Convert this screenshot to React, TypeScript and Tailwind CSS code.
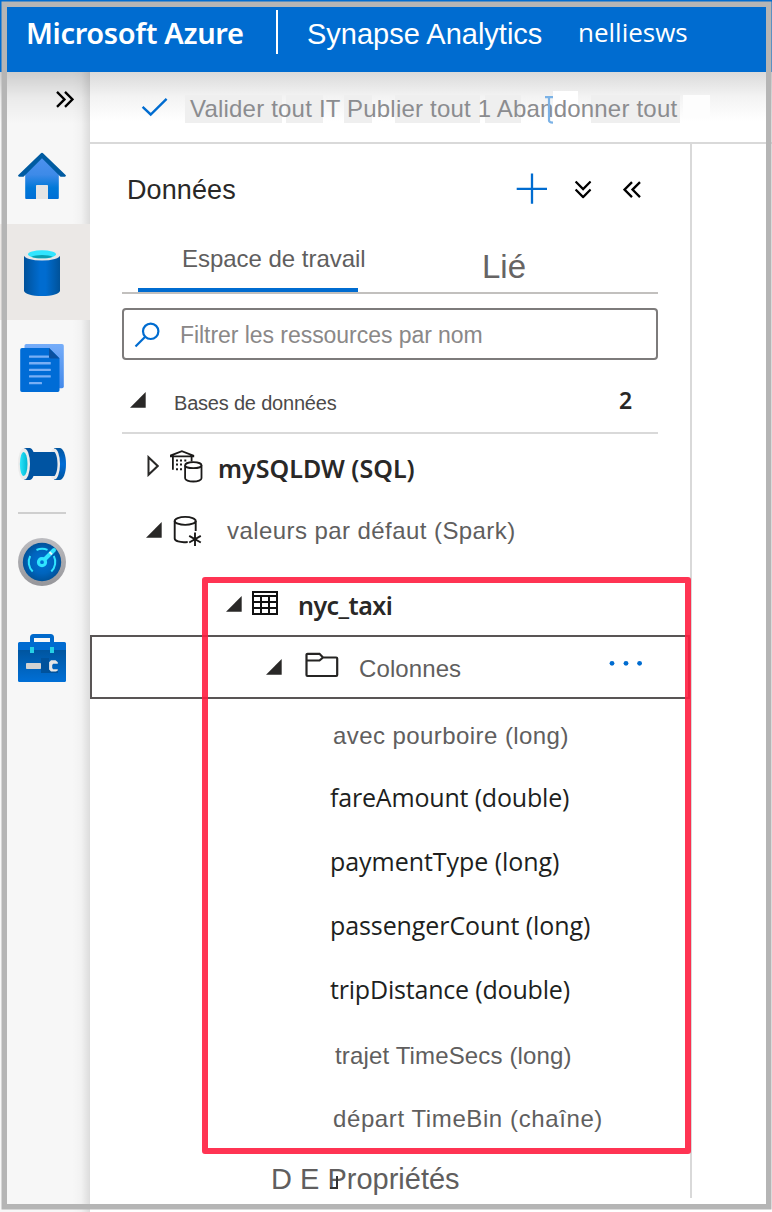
import React from "react";

function HomeIcon() {
  return (
    <svg viewBox="0 0 48 48" className="h-12 w-12">
      <defs>
        <linearGradient id="home" x1="0" y1="0" x2="0" y2="1">
          <stop offset="0" stopColor="#5093f0" />
          <stop offset="0.45" stopColor="#3d8ae8" />
          <stop offset="0.75" stopColor="#0078d8" />
          <stop offset="1" stopColor="#006fd6" />
        </linearGradient>
      </defs>
      <path d="M24 3 7.2 19.5V45.9a1 1 0 0 0 1 1h31.6a1 1 0 0 0 1-1V19.5z" fill="url(#home)" />
      <path d="M22.7 1.500a1.8 1.8 0 0 1 2.600 0L47.600 23a.8.8 0 0 1 0 1.200l-.6.6H42.500L24 6.200 5.500 24.800H1L.4 24.200a.8.8 0 0 1 0-1.200z" fill="#005ba1" />
      <path d="M18 33.800a.8.8 0 0 1 .8-.8h10.400a.8.8 0 0 1 .8.8v13.100H18z" fill="#e4e4e4" />
    </svg>
  );
}

function DataIcon() {
  return (
    <svg viewBox="0 0 48 48" className="h-12 w-12">
      <defs>
        <linearGradient id="cyl" x1="0" y1="0" x2="1" y2="0">
          <stop offset="0" stopColor="#00519a" />
          <stop offset="0.45" stopColor="#006cd0" />
          <stop offset="0.6" stopColor="#006cd0" />
          <stop offset="1" stopColor="#005299" />
        </linearGradient>
      </defs>
      <path d="M6 7.400V42.400C6 45.600 14 48 24 48s18-2.400 18-5.600V7.400z" fill="url(#cyl)" />
      <ellipse cx="24" cy="7.300" rx="18" ry="5.300" fill="#e6e6e6" />
      <ellipse cx="24" cy="6.300" rx="14" ry="4" fill="#30e5ff" />
      <path d="M13.300 8.800C15.800 7.600 19.500 6.900 24 6.900s8.200.7 10.700 1.900c-2.500 1-6.300 1.500-10.700 1.500s-8.200-.5-10.700-1.500z" fill="#0aa0b2" />
    </svg>
  );
}

function DocIcon() {
  return (
    <svg viewBox="0 0 48 48" className="h-12 w-12">
      <defs>
        <linearGradient id="back" x1="0" y1="0" x2="0" y2="1">
          <stop offset="0" stopColor="#76adf9" />
          <stop offset="1" stopColor="#4389ea" />
        </linearGradient>
      </defs>
      <rect x="6.500" y="0" width="39.300" height="44.300" rx="1.800" fill="url(#back)" />
      <path d="M4 4h27.200l10.300 10.300v32a1.700 1.700 0 0 1-1.700 1.700H3.900a1.700 1.700 0 0 1-1.700-1.700V5.800A1.800 1.800 0 0 1 4 4z" fill="#006cd6" />
      <path d="M31 4l10.500 10.400H32.600A1.600 1.600 0 0 1 31 12.800z" fill="#0a509f" />
      <g fill="#78aff5">
        <rect x="11" y="11.500" width="20" height="2.300" rx=".5" />
        <rect x="11" y="18.100" width="21.800" height="2.300" rx=".5" />
        <rect x="11" y="24.700" width="21.800" height="2.300" rx=".5" />
        <rect x="11" y="31.300" width="21.800" height="2.300" rx=".5" />
        <rect x="11" y="37.900" width="13" height="2.300" rx=".5" />
      </g>
    </svg>
  );
}

function PipeIcon() {
  return (
    <svg viewBox="0 0 48 48" className="h-12 w-12">
      <defs>
        <linearGradient id="pipe" x1="0" y1="0" x2="0" y2="1">
          <stop offset="0" stopColor="#0055a0" />
          <stop offset="0.5" stopColor="#006cd6" />
          <stop offset="1" stopColor="#0055a0" />
        </linearGradient>
        <linearGradient id="hole" x1="0" y1="0" x2="1" y2="0">
          <stop offset="0" stopColor="#2be4fb" />
          <stop offset="1" stopColor="#00b8d4" />
        </linearGradient>
      </defs>
      <path d="M36 8h5.600C45.300 8 48 14.800 48 24s-2.700 16-6.400 16H36z" fill="url(#pipe)" />
      <ellipse cx="36.300" cy="24" rx="5.700" ry="15.600" fill="#ebebeb" />
      <path d="M6 8h5.500c1.700 0 3 1.500 4 4h21c1.900 2 3 6.600 3 12s-1.100 10-3 12h-21c-1 2.500-2.300 4-4 4H6z" fill="#0054a2" />
      <ellipse cx="6" cy="24" rx="6" ry="15.800" fill="#ebebeb" />
      <ellipse cx="5.700" cy="24" rx="3.800" ry="12" fill="url(#hole)" />
    </svg>
  );
}

function GaugeIcon() {
  return (
    <svg viewBox="0 0 48 48" className="h-12 w-12">
      <defs>
        <linearGradient id="ring" x1="0" y1="0" x2="0" y2="1">
          <stop offset="0" stopColor="#bcbcc0" />
          <stop offset="1" stopColor="#96969a" />
        </linearGradient>
        <radialGradient id="dial">
          <stop offset="0" stopColor="#0070d4" />
          <stop offset="0.6" stopColor="#0064bd" />
          <stop offset="1" stopColor="#00529a" />
        </radialGradient>
      </defs>
      <circle cx="24" cy="24" r="24" fill="url(#ring)" />
      <circle cx="24" cy="24" r="19.200" fill="url(#dial)" />
      <g fill="none" stroke="#30e5ff" strokeWidth="2">
        <path d="M14.700 33.500A13.200 13.200 0 0 1 12.200 18" />
        <path d="M18.500 12A13.200 13.200 0 0 1 29.500 11.800" />
        <path d="M35.800 18A13.200 13.200 0 0 1 33.300 33.500" />
      </g>
      <path d="M26 22 36 12" stroke="#30e5ff" strokeWidth="4" strokeLinecap="round" />
      <path d="M31.500 14 34 16.500" stroke="#e8f8fb" strokeWidth="2" />
      <circle cx="24" cy="24.200" r="3.500" fill="#0070d4" stroke="#30e5ff" strokeWidth="3.200" />
    </svg>
  );
}

function ToolboxIcon() {
  return (
    <svg viewBox="0 0 48 48" className="h-12 w-12">
      <defs>
        <linearGradient id="box" x1="0" y1="0" x2="0" y2="1">
          <stop offset="0" stopColor="#00559f" />
          <stop offset="1" stopColor="#006fd6" />
        </linearGradient>
      </defs>
      <path d="M14 9V3.500A1.500 1.500 0 0 1 15.500 2h17A1.500 1.500 0 0 1 34 3.500V9" fill="none" stroke="#0069cb" strokeWidth="4" />
      <path d="M1.500 8h45A1.500 1.500 0 0 1 48 9.500V16H0V9.500A1.500 1.500 0 0 1 1.500 8z" fill="#006bd0" />
      <path d="M0 16h48v30.500a1.500 1.500 0 0 1-1.500 1.500h-45A1.500 1.500 0 0 1 0 46.500z" fill="url(#box)" />
      <rect x="12" y="13" width="4" height="6" fill="#25cfe4" />
      <rect x="32" y="13" width="4" height="6" fill="#25cfe4" />
      <path d="M23 24h8v15h-8z" fill="#00529c" />
      <path d="M31 35h9v4h-9z" fill="#00529c" />
      <rect x="8" y="29" width="15" height="6" rx=".8" fill="#d2d2d2" />
      <path d="M33 26.200h4.500l2.300 2.100v1.500h-4.600l-1 1.200v3l1 1.200h4.600v1.200L38 37.600h-5l-1.900-2v-7.300z" fill="#e6e6e6" />
    </svg>
  );
}

function DoubleChevron({ className }: { className: string }) {
  return (
    <svg viewBox="0 0 18 17" className={"h-[17px] w-[18px] shrink-0 " + className} fill="none" stroke="#000" strokeWidth="2.300">
      <path d="M1 .9 8.500 8.400 1 15.900M9 .9 16.500 8.400 9 15.900" />
    </svg>
  );
}

function Expanded({ className }: { className: string }) {
  return (
    <svg viewBox="0 0 16 16" className={"h-4 w-4 shrink-0 " + className}>
      <path d="M15.700 0V15.700H0z" fill="#292827" />
    </svg>
  );
}

function Collapsed({ className }: { className: string }) {
  return (
    <svg viewBox="0 0 12 22" className={"h-[22px] w-3 shrink-0 " + className}>
      <path d="M1.500 2.200 10.700 11 1.500 19.800z" fill="none" stroke="#292827" strokeWidth="2" />
    </svg>
  );
}

const arial = "whitespace-nowrap leading-none font-['Liberation_Sans',Arial,sans-serif] ";
const segoe = "whitespace-nowrap leading-none font-['Open_Sans','Noto_Sans',sans-serif] ";
const segoeStrong = "whitespace-nowrap leading-none font-semibold font-['Noto_Sans','Open_Sans',sans-serif] ";

const columns = [
  { label: "avec pourboire (long)", style: arial + "mt-[25px] ml-[243px] text-[24px] tracking-[0.430px] text-[#605e5e]" },
  { label: "fareAmount (double)", style: segoe + "mt-[22px] ml-[240px] text-[25px] tracking-[-0.180px] text-[#201f1e]" },
  { label: "paymentType (long)", style: segoe + "mt-[22px] ml-[240px] text-[25px] tracking-[-0.050px] text-[#201f1e]" },
  { label: "passengerCount (long)", style: segoe + "mt-[22px] ml-[240px] text-[25px] tracking-[-0.090px] text-[#201f1e]" },
  { label: "tripDistance (double)", style: segoe + "mt-[22px] ml-[240px] text-[25px] tracking-[-0.190px] text-[#201f1e]" },
  { label: "trajet TimeSecs (long)", style: arial + "mt-[25px] ml-[245px] text-[24px] tracking-[0.150px] text-[#605e5e]" },
  { label: "départ TimeBin (chaîne)", style: arial + "mt-[24px] ml-[243px] text-[24px] tracking-[0.600px] text-[#605e5e]" },
];

const ghosts = [
  "left-[95px] top-[23px] w-[97px] h-[28px] bg-[#efefef]",
  "left-[196px] top-[23px] w-[37px] h-[28px] bg-[#efefef]",
  "left-[254px] top-[23px] w-[28px] h-[28px] bg-[#efefef]",
  "left-[305px] top-[23px] w-[85px] h-[28px] bg-[#efefef]",
  "left-[395px] top-[23px] w-[36px] h-[28px] bg-[#efefef]",
  "left-[501px] top-[23px] w-[89px] h-[28px] bg-[#efefef]",
  "left-[463px] top-[19px] w-[25px] h-[32px] bg-white",
  "left-[593px] top-[23px] w-[27px] h-[23px] bg-[#fdfdfd]",
];

function Header() {
  return (
    <header className="flex h-[72px] bg-[#006cd0] text-white">
      <h1 className={segoeStrong + "mt-[18px] ml-[26px] w-[250px] text-[29px] tracking-[-0.350px]"}>Microsoft Azure</h1>
      <div className="mt-[10px] h-[44px] w-[2px] bg-white" />
      <span className={arial + "mt-[20px] ml-[29px] w-[271px] text-[29px]"}>Synapse Analytics</span>
      <span className={segoe + "mt-[19px] text-[26px]"}>nelliesws</span>
    </header>
  );
}

function Sidebar() {
  return (
    <nav className="relative flex w-[90px] shrink-0 flex-col bg-[#f7f7f7]">
      <div className="pointer-events-none absolute inset-y-0 right-0 w-[18px] bg-linear-to-r from-transparent via-black/[0.02] to-black/[0.11]" />
      <div className="pointer-events-none absolute inset-x-0 top-0 h-[52px] bg-linear-to-b from-black/[0.17] via-black/[0.05] to-transparent" />
      <div className="flex h-[56px] pt-[19px] pl-[56px]"><DoubleChevron className="" /></div>
      <div className="flex h-24 items-center pl-[18px]"><HomeIcon /></div>
      <div className="relative flex h-24 items-center bg-[#ebe8e6] pl-[18px]"><DataIcon /></div>
      <div className="flex h-24 items-center pl-[18px]"><DocIcon /></div>
      <div className="flex h-24 items-center pl-[18px]"><PipeIcon /></div>
      <div className="ml-[18px] h-[2px] w-12 bg-[#cfcfcf]" />
      <div className="flex h-24 items-center pl-[18px]"><GaugeIcon /></div>
      <div className="flex h-24 items-center pl-[18px]"><ToolboxIcon /></div>
    </nav>
  );
}

function Toolbar() {
  return (
    <div className="relative flex h-[72px] border-b-2 border-[#d9d9d9] bg-linear-to-b from-[#dadada] via-[#f3f3f3] via-35% to-white to-70%">
      {ghosts.map((g) => (
        <div key={g} className={"absolute " + g} />
      ))}
      <svg viewBox="0 0 28 20" className="relative mt-[25px] ml-[51px] h-5 w-7 shrink-0" fill="none" stroke="#006cd0" strokeWidth="2.400">
        <path d="M1.600 9.900 9.700 17.500 25.600 1.900" />
      </svg>
      <span className={arial + "relative mt-[25px] ml-[21px] text-[24px] tracking-[0.200px] text-[#8b8c8f]"}>
        Valider tout IT Publier tout 1 Abandonner tout
      </span>
      <svg viewBox="0 0 8 28" className="absolute top-[24px] left-[455px] h-7 w-2" fill="none" stroke="#7bb2e6" strokeWidth="2.200">
        <path d="M0 1.200H8M4 1.200V24.500Q4 26.500 8 26.600" />
      </svg>
    </div>
  );
}

function Tree() {
  return (
    <div className="flex flex-col">
      <div className="flex h-[66px]">
        <Collapsed className="mt-[21px] ml-[57px]" />
        <svg viewBox="0 0 34 34" className="mt-[15px] ml-[11px] h-[34px] w-[34px] shrink-0" fill="none" stroke="#1b1a19" strokeWidth="1.800">
          <path d="M.5 8.300V6.600L11.900 2.200 23.300 6.600V8.300M.5 7.400H23.300M2.900 8V20.800M21.600 8V12.500" />
          <path d="M6 11.500h2M10 11.500h2M14.300 11.500h2M6 15.600h2M10 15.600h2M6 20.300h2M10 20.300h2" strokeWidth="2" />
          <ellipse cx="23.300" cy="16.200" rx="8.200" ry="3" />
          <path d="M15.100 16.200V29.200c0 1.900 3.700 3.300 8.200 3.300s8.200-1.400 8.200-3.300V16.200" />
        </svg>
        <span className={segoeStrong + "mt-[22px] ml-[14px] text-[25px] tracking-[0.020px] text-[#292827]"}>mySQLDW (SQL)</span>
      </div>
      <div className="flex h-[62px]">
        <Expanded className="mt-[22px] ml-[56px]" />
        <svg viewBox="0 0 30 32" className="mt-[15px] ml-[11px] h-8 w-[30px] shrink-0" fill="none" stroke="#1b1a19" strokeWidth="1.900">
          <ellipse cx="12.200" cy="5.900" rx="10.500" ry="4" />
          <path d="M1.700 5.900V23.500c0 2.400 4.800 4.300 13 3.500M22.700 5.900V16" />
          <path d="M22 17.500v13.500M16.200 20.900l11.600 6.600M27.800 20.900l-11.600 6.600" />
        </svg>
        <span className={arial + "mt-[19px] ml-[24px] text-[24px] tracking-[0.430px] text-[#605e5e]"}>valeurs par défaut (Spark)</span>
      </div>
      <div className="flex h-[73px]">
        <Expanded className="mt-[34px] ml-[136px]" />
        <svg viewBox="0 0 26 24" className="mt-[29px] ml-[10px] h-6 w-[26px] shrink-0" fill="none" stroke="#111" strokeWidth="2">
          <path d="M1 1h24v22H1zM1 5h24M1 11h24M1 17h24M9 5v18M17 5v18" />
        </svg>
        <span className={segoeStrong + "mt-[31px] ml-[20px] text-[25px] tracking-[-0.550px] text-[#292827]"}>nyc_taxi</span>
      </div>
      <div className="flex h-[64px] border-2 border-[#595555]">
        <Expanded className="mt-[22px] ml-[174px]" />
        <svg viewBox="0 0 34 26" className="mt-[15px] ml-[23px] h-[26px] w-[34px] shrink-0" fill="none" stroke="#252423" strokeWidth="2.200">
          <path d="M2.500 1.800H14.500L18 5.500H31.200a1 1 0 0 1 1 1V23a1 1 0 0 1-1 1H2.500a1 1 0 0 1-1-1V2.800a1 1 0 0 1 1-1zM1.500 8.500H14.500L18 5.500" />
        </svg>
        <span className={arial + "mt-[20px] ml-[20px] w-[249px] text-[24px] tracking-[0.100px] text-[#605e5e]"}>Colonnes</span>
        <svg viewBox="0 0 34 6" className="mt-[23px] ml-px h-[6px] w-[34px] shrink-0" fill="#006cd0">
          <circle cx="3" cy="3.300" r="2.400" />
          <circle cx="17" cy="3.300" r="2.400" />
          <circle cx="30.600" cy="3.300" r="2.400" />
        </svg>
      </div>
      {columns.map((c) => (
        <div key={c.label} className="flex h-16">
          <span className={c.style}>{c.label}</span>
        </div>
      ))}
      <div className="relative flex">
        <span className={arial + "mt-[18px] ml-[181px] text-[29px] text-[#605e5e]"}>D E Propriétés</span>
        <div className="absolute top-[29px] left-[240px] h-[13px] w-[8px] border-r-2 border-b-2 border-[#333232]" />
      </div>
    </div>
  );
}

function DataPanel() {
  return (
    <section className="relative flex h-[1054px] w-[602px] flex-col border-r-2 border-[#d9d9d9]">
      <div className="flex h-[92px]">
        <h2 className={arial + "mt-[33px] ml-[37px] w-[388px] text-[27px] tracking-[0.100px] text-[#292827]"}>Données</h2>
        <svg viewBox="0 0 32 32" className="mt-[29px] ml-px h-8 w-8 shrink-0" stroke="#006cd0" strokeWidth="2.300">
          <path d="M.7 15.900H31M16 .5V30.800" />
        </svg>
        <DoubleChevron className="mt-[37px] ml-[26px] rotate-90" />
        <DoubleChevron className="mt-[37px] ml-[31px] rotate-180" />
      </div>
      <div className="mx-8 flex h-[58px] border-b-2 border-[#c2c0be]">
        <div className="ml-4 flex h-[56px] w-[220px] border-b-4 border-[#006cd0]">
          <span className={arial + "mt-[11px] ml-[44px] text-[24px] tracking-[-0.030px] text-[#605e5e]"}>Espace de travail</span>
        </div>
        <span className={arial + "mt-[14px] ml-[124px] text-[33px] text-[#666464]"}>Lié</span>
      </div>
      <div className="mx-8 mt-[14px] flex h-[52px] rounded-[4px] border-2 border-[#7d7b7b]">
        <svg viewBox="0 0 26 26" className="mt-[12px] ml-[10px] h-[26px] w-[26px] shrink-0" fill="none" stroke="#006cd0" strokeWidth="2.200">
          <circle cx="16.700" cy="9.300" r="7.700" />
          <path d="M11.200 14.800 1.500 24.500" />
        </svg>
        <span className={arial + "mt-[14px] ml-[20px] text-[23px] tracking-[-0.050px] text-[#8a8888]"}>Filtrer les ressources par nom</span>
      </div>
      <div className="mx-8 flex h-[74px] border-b-2 border-[#d9d9d9]">
        <Expanded className="mt-[32px] ml-2" />
        <span className={arial + "mt-[33px] ml-[28px] w-[445px] text-[20px] tracking-[-0.200px] text-[#4c4a4a]"}>Bases de données</span>
        <span className={segoeStrong + "mt-[29px] text-[23px] text-[#292827]"}>2</span>
      </div>
      <Tree />
      <div className="pointer-events-none absolute top-[433px] left-[112px] h-[577px] w-[489px] rounded-[3px] border-6 border-[#ff1e40]/90" />
    </section>
  );
}

export default function App() {
  return (
    <div className="relative flex h-[1212px] w-[772px] flex-col overflow-hidden bg-white">
      <Header />
      <div className="flex min-h-0 flex-1">
        <Sidebar />
        <main className="flex min-w-0 flex-1 flex-col">
          <Toolbar />
          <DataPanel />
        </main>
      </div>
      <div className="pointer-events-none absolute top-[2px] left-[2px] h-[1207px] w-[769px] border-5 border-[#b5b5b5] shadow-[0_0_0_0.5px_#b5b5b5]" />
    </div>
  );
}
